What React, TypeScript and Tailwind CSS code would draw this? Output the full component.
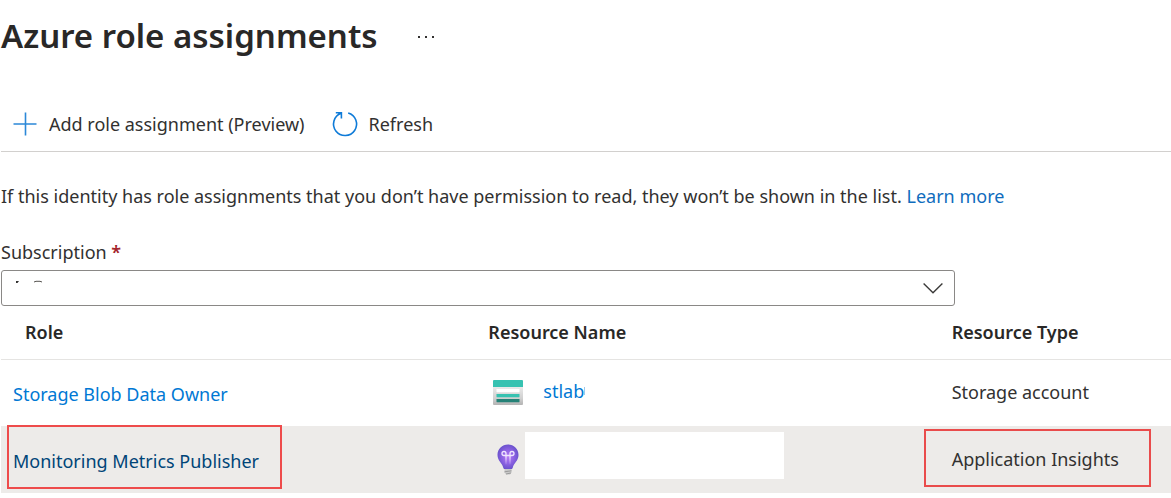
import React from "react";

function PlusIcon() {
  return (
    <svg className="size-6" viewBox="0 0 24 24" fill="none" stroke="#2b88d8" strokeWidth="1.6" aria-hidden="true">
      <path d="M12.500 .5v23M.5 12h23" />
    </svg>
  );
}

function RefreshIcon() {
  return (
    <svg className="size-6 overflow-visible" viewBox="0 0 24 24" fill="none" stroke="#0f7bd8" strokeWidth="1.6" aria-hidden="true">
      <path d="M15.200 1a11.500 11.500 0 1 1-7.200.3M2.800.800H8.400V6.400" />
    </svg>
  );
}

function StorageIcon() {
  return (
    <svg className="h-[25px] w-[30px]" viewBox="0 0 30 25" aria-hidden="true">
      <defs>
        <linearGradient id="storage-body" x1="0" y1="1" x2="0" y2="0">
          <stop offset="0" stopColor="#b3b3b3" />
          <stop offset=".35" stopColor="#d0d0d0" />
          <stop offset="1" stopColor="#ececec" />
        </linearGradient>
      </defs>
      <path d="M0 6h30v18a1 1 0 0 1-1 1H1a1 1 0 0 1-1-1z" fill="url(#storage-body)" />
      <path d="M1 0h28a1 1 0 0 1 1 1v6H0V1a1 1 0 0 1 1-1z" fill="#37c2b1" />
      <rect x="3.500" y="9" width="23" height="3.200" rx=".4" fill="#fff" />
      <rect x="3.500" y="14" width="23" height="3.200" rx=".4" fill="#37c2b1" />
      <rect x="3.500" y="19" width="23" height="3.200" rx=".4" fill="#258277" />
    </svg>
  );
}

function InsightsIcon() {
  return (
    <svg className="h-[31px] w-[22px]" viewBox="0 0 22 31" aria-hidden="true">
      <defs>
        <radialGradient id="bulb" cx=".5" cy=".5" r=".55">
          <stop offset="0" stopColor="#b77af4" />
          <stop offset=".5" stopColor="#8f63e4" />
          <stop offset="1" stopColor="#644fc8" />
        </radialGradient>
        <linearGradient id="filament" x1="0" y1="0" x2="0" y2="1">
          <stop offset=".4" stopColor="#f0e6ff" />
          <stop offset="1" stopColor="#f0e6ff" stopOpacity=".1" />
        </linearGradient>
      </defs>
      <path d="M21.500 11C21.500 5 16.800.500 11 .500S.500 5 .500 11c0 6 4.800 8 5.700 12.500.1.900.6 1.500 1.500 1.500h6.600c.9 0 1.400-.6 1.500-1.500C16.700 19 21.500 17 21.500 11z" fill="url(#bulb)" />
      <path d="M9 20.500V9.500a2 2 0 1 0-2 2h8a2 2 0 1 0-2-2v11" fill="none" stroke="url(#filament)" strokeWidth="1.300" />
      <path d="M7.500 25h7v3.300L13 30.500H9l-1.500-2.200z" fill="#c9c9c9" />
      <path d="M7.500 27.800l7-1M9 30l5-1" stroke="#8f8f8f" strokeWidth=".8" />
    </svg>
  );
}

export default function App() {
  return (
    <main className="bg-white pl-px font-['Noto_Sans','Open_Sans',sans-serif] text-lg leading-6 text-[#323130]">
      <header className="flex items-center gap-10 pt-3">
        <h1 className="text-[33px] leading-[48px] font-semibold text-[#292827]">Azure role assignments</h1>
        <button type="button" aria-label="More actions" className="flex h-6 w-4 items-center justify-center">
          <svg className="h-1 w-4" viewBox="0 0 16 4" fill="#323130" aria-hidden="true">
            <path d="M0 2h2v2H0zM7 2h2v2H7zM14 2h2v2h-2z" />
          </svg>
        </button>
      </header>

      <div className="mt-9 flex items-center gap-7 border-b border-[#d2d0ce] pt-4 pb-[15px] pl-3">
        <button type="button" className="flex items-center gap-3 whitespace-nowrap">
          <PlusIcon />
          Add role assignment (Preview)
        </button>
        <button type="button" className="flex items-center gap-3 whitespace-nowrap">
          <RefreshIcon />
          Refresh
        </button>
      </div>

      <p className="pt-8">
        If this identity has role assignments that you don’t have permission to read, they won’t be shown in the list.{" "}
        <a href="#learn-more" className="text-[#0f6cbd]">Learn more</a>
      </p>

      <div className="mt-8 w-[81.5%]">
        <label htmlFor="subscription" className="block">
          Subscription <span className="font-semibold text-[#a4262c]">*</span>
        </label>
        <div className="relative mt-[6px]">
          <select id="subscription" className="block h-9 w-full appearance-none rounded-[3px] border border-[#8a8886] bg-white px-3">
            <option value="" />
          </select>
          <svg className="pointer-events-none absolute top-2 left-3 h-4 w-8" viewBox="0 0 32 16" aria-hidden="true">
            <path d="M3 3h3l-1.500 2H3z" fill="#323130" />
            <path d="M21 4l2-.7h4l2 .7" fill="none" stroke="#55534f" />
          </svg>
          <svg className="pointer-events-none absolute top-3 right-3 h-3 w-5" viewBox="0 0 20 12" fill="none" stroke="#3b3a39" strokeWidth="1.400" aria-hidden="true">
            <path d="M.6 1.500l9.400 9.200 9.400-9.200" />
          </svg>
        </div>
      </div>

      <table className="w-full table-fixed border-collapse text-left">
        <colgroup>
          <col className="w-[39.6%]" />
          <col className="w-[39.6%]" />
          <col />
        </colgroup>
        <thead className="text-[#292827]">
          <tr className="h-[53px] border-b border-[#e5e4e2]">
            <th className="pl-6 font-semibold">Role</th>
            <th className="pl-6 font-semibold">Resource Name</th>
            <th className="pl-6 font-semibold">Resource Type</th>
          </tr>
        </thead>
        <tbody>
          <tr className="h-[67px] border-b border-[#edebe9]">
            <td className="pt-0.5 pl-3">
              <a href="#storage-blob-data-owner" className="text-[#0078d4]">Storage Blob Data Owner</a>
            </td>
            <td className="pl-[29px]">
              <div className="flex items-center gap-5">
                <StorageIcon />
                <a href="#storage-account" className="flex items-center pb-1 text-[#0078d4]">
                  stlab
                  <span className="h-2 w-px bg-[#9cc8ee]" />
                </a>
              </div>
            </td>
            <td className="pb-0.5 pl-6">Storage account</td>
          </tr>
          <tr className="h-[67px] bg-[#edebe9]">
            <td className="relative pt-0.5 pl-3">
              <a href="#monitoring-metrics-publisher" className="text-[#004578]">Monitoring Metrics Publisher</a>
              <span className="pointer-events-none absolute -top-0.5 left-1.5 h-16 w-[275px] border-2 border-[#ee4b4b]" />
            </td>
            <td className="pl-[33px]">
              <div className="flex items-center gap-[6px]">
                <InsightsIcon />
                <span className="mb-2 h-[47px] w-[259px] bg-white" />
              </div>
            </td>
            <td className="relative pb-0.5 pl-6">
              Application Insights
              <span className="pointer-events-none absolute top-0.5 -left-1 h-[58px] w-[227px] border-2 border-[#e94b4b]" />
            </td>
          </tr>
        </tbody>
      </table>
    </main>
  );
}
